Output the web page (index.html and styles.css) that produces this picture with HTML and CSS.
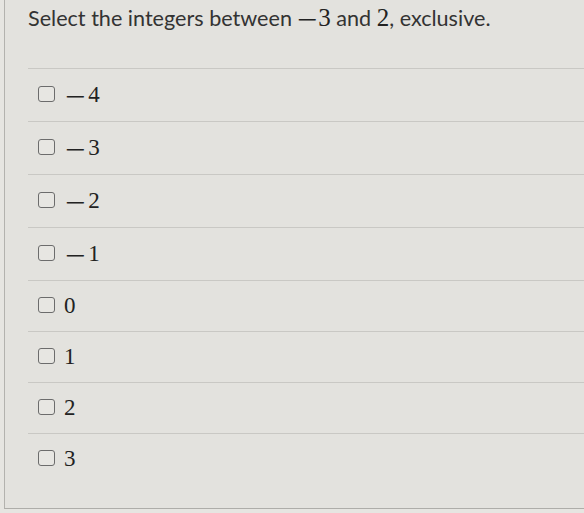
FILE: index.html
```html
<!DOCTYPE html>
<html>
<head>
<meta charset="utf-8">
<link rel="stylesheet" href="styles.css">
</head>
<body>
<div class="card">
  <div class="title">Select the integers between <span class="math"><span class="minus">−</span>3</span> and <span class="math">2</span>, exclusive.</div>
  <ul class="options">
    <li class="option"><span class="box"></span><span class="num"><span class="minus">−</span>4</span></li>
    <li class="option"><span class="box"></span><span class="num"><span class="minus">−</span>3</span></li>
    <li class="option"><span class="box"></span><span class="num"><span class="minus">−</span>2</span></li>
    <li class="option"><span class="box"></span><span class="num"><span class="minus">−</span>1</span></li>
    <li class="option"><span class="box"></span><span class="num">0</span></li>
    <li class="option"><span class="box"></span><span class="num">1</span></li>
    <li class="option"><span class="box"></span><span class="num">2</span></li>
    <li class="option"><span class="box"></span><span class="num">3</span></li>
  </ul>
</div>
</body>
</html>
```
FILE: styles.css
```css
html, body {
  margin: 0;
  padding: 0;
  background: #e6e5e1;
  overflow: hidden;
}
.card {
  margin-left: 4px;
  height: 509px;
  box-sizing: border-box;
  border-left: 1px solid #b3b2ae;
  border-bottom: 1px solid #aeada9;
  background: #e3e2de;
  padding-left: 23px;
}
.title {
  padding-top: 5px;
  height: 26px;
  font-family: Lato, "Liberation Sans", sans-serif;
  font-size: 21.6px;
  line-height: 26px;
  color: #333;
  white-space: nowrap;
}
.math {
  font-family: "Liberation Serif", serif;
  font-size: 25px;
  line-height: 1;
  color: #222;
}
.math .minus {
  display: inline-block;
  font-family: "DejaVu Sans", sans-serif;
  font-size: 20px;
  line-height: 1;
  transform: scaleX(1.35);
  margin: 0 3px 0 1px;
}
.options {
  list-style: none;
  margin: 37px 0 0 0;
  padding: 0;
}
.option {
  display: flex;
  align-items: center;
  gap: 9px;
  height: 53px;
  box-sizing: border-box;
  border-top: 1px solid #c9c8c4;
  padding: 0 0 2px 10px;
}
.option:nth-child(n+5) {
  height: 51px;
}
.box {
  width: 17px;
  height: 16px;
  box-sizing: border-box;
  border: 1.5px solid #6c6c6c;
  border-radius: 3px;
  background: #e7e6e2;
  flex: none;
}
.num {
  font-family: "Liberation Serif", serif;
  font-size: 23px;
  color: #222;
  line-height: 1;
}
.num .minus {
  display: inline-block;
  font-family: "DejaVu Sans", sans-serif;
  font-size: 17px;
  transform: scaleX(1.6);
  margin: 0 6px 0 4px;
}
```
